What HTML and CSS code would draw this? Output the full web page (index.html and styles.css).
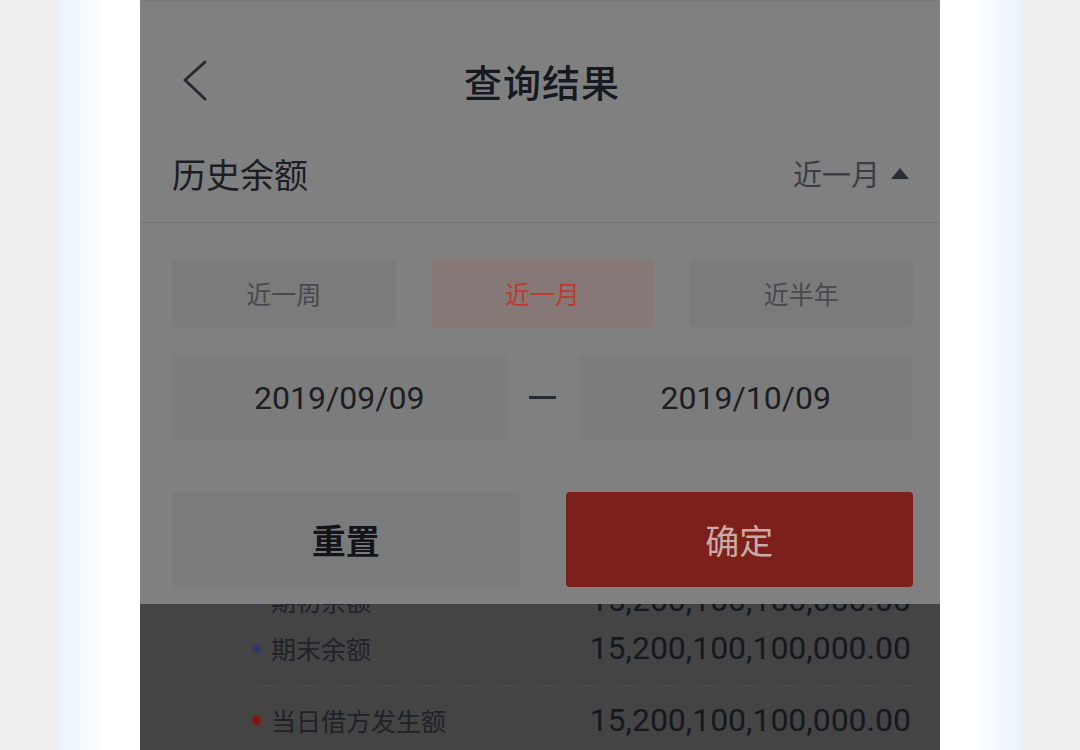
FILE: index.html
```html
<!DOCTYPE html>
<html lang="zh-CN">
<head>
<meta charset="utf-8">
<title>查询结果</title>
<link rel="stylesheet" href="styles.css">
</head>
<body>
<div class="stage">
  <div class="phone">
    <header class="nav">
      <span class="back">
        <svg width="28" height="42" viewBox="0 0 28 42"><polyline points="23,2 3,20 23,39" fill="none" stroke="#262930" stroke-width="3" stroke-linecap="round" stroke-linejoin="round"/></svg>
      </span>
      <h1 class="title">查询结果</h1>
    </header>
    <div class="filter">
      <span class="filter-label">历史余额</span>
      <span class="filter-range">近一月<i class="caret"></i></span>
    </div>
    <section class="panel">
      <div class="periods">
        <button class="period">近一周</button>
        <button class="period active">近一月</button>
        <button class="period">近半年</button>
      </div>
      <div class="dates">
        <div class="date">2019/09/09</div>
        <div class="dash"><span></span></div>
        <div class="date">2019/10/09</div>
      </div>
      <div class="actions">
        <button class="btn reset">重置</button>
        <button class="btn confirm">确定</button>
      </div>
    </section>
    <div class="backdrop">
      <div class="list">
        <div class="row"><span class="name"><i class="dot blue"></i>期初余额</span><span class="value">15,200,100,100,000.00</span></div>
        <div class="row"><span class="name"><i class="dot blue"></i>期末余额</span><span class="value">15,200,100,100,000.00</span></div>
        <div class="sep"></div>
        <div class="row tall"><span class="name"><i class="dot red"></i>当日借方发生额</span><span class="value">15,200,100,100,000.00</span></div>
      </div>
    </div>
  </div>
</div>
</body>
</html>
```

FILE: styles.css
```css
* { box-sizing: border-box; }
html, body { margin: 0; padding: 0; }
body {
  width: 1080px;
  height: 750px;
  overflow: hidden;
  background: #efefef;
  font-family: "Noto Sans CJK SC", "Noto Sans", sans-serif;
}
.stage {
  width: 962px;
  height: 750px;
  margin-left: 59px;
  padding: 0 81px;
  background: linear-gradient(to right, #e7f4fd 0px, #ffffff 48px, #ffffff calc(100% - 48px), #e7f4fd 100%);
}
.phone {
  width: 800px;
  height: 750px;
  background: #808080;
  border-top: 1px solid #777777;
  display: flex;
  flex-direction: column;
  overflow: hidden;
}
.nav {
  height: 129px;
  padding-top: 30px;
  display: flex;
  align-items: center;
  position: relative;
}
.back {
  position: absolute;
  left: 42px;
  top: 59px;
  width: 28px;
  height: 42px;
  display: block;
}
.back svg { display: block; }
.title {
  margin: 0 auto;
  padding-left: 4px;
  font-size: 38px;
  font-weight: 500;
  color: #16191f;
  letter-spacing: 1px;
  line-height: 1;
}
.filter {
  height: 93px;
  border-bottom: 1px solid #737373;
  display: flex;
  align-items: center;
  justify-content: space-between;
  padding: 0 31px 6px 32px;
}
.filter-label {
  font-size: 34px;
  color: #1b1e25;
}
.filter-range {
  font-size: 29px;
  color: #3b3e45;
  display: flex;
  align-items: center;
}
.caret {
  display: inline-block;
  width: 0;
  height: 0;
  margin-left: 11px;
  border-left: 9px solid transparent;
  border-right: 9px solid transparent;
  border-bottom: 11px solid #2a2d35;
}
.panel {
  padding: 36px 27px 17px 32px;
}
.periods {
  display: grid;
  grid-template-columns: 1fr 1fr 1fr;
  column-gap: 35px;
}
button {
  font-family: inherit;
  border: 0;
  padding: 0;
  margin: 0;
}
.period {
  height: 68px;
  border-radius: 4px;
  background: #7b7b7b;
  color: #47494e;
  font-size: 25px;
}
.period.active {
  background: #867877;
  color: #c0392e;
}
.dates {
  margin-top: 28px;
  display: grid;
  grid-template-columns: 1fr 72px 1fr;
}
.date {
  height: 85px;
  background: #7c7c7c;
  border-radius: 3px;
  display: flex;
  align-items: center;
  justify-content: center;
  font-family: Roboto, "Noto Sans", sans-serif;
  font-size: 32px;
  color: #1b1e25;
}
.dash {
  display: flex;
  align-items: center;
  justify-content: center;
}
.dash span {
  display: block;
  width: 27px;
  height: 3px;
  background: #272a32;
}
.actions {
  margin-top: 52px;
  display: grid;
  grid-template-columns: 1fr 1fr;
  column-gap: 46px;
}
.btn {
  height: 95px;
  border-radius: 4px;
  font-size: 34px;
}
.reset {
  background: #7b7b7b;
  color: #121419;
  font-weight: 700;
}
.confirm {
  background: #7d201b;
  color: #c8aaa6;
}
.backdrop {
  flex: 1;
  background: #444444;
  overflow: hidden;
}
.list {
  margin-top: -28px;
  padding: 0 29px 0 105px;
}
.row {
  height: 48px;
  display: flex;
  align-items: center;
  justify-content: space-between;
}
.row.tall { height: 66px; }
.name {
  display: flex;
  align-items: center;
  font-size: 25px;
  color: #1f2229;
}
.dot {
  display: block;
  flex: none;
  width: 9px;
  height: 9px;
  border-radius: 50%;
  margin: 0 10px 0 7px;
}
.dot.blue { background: #2c3a5e; }
.dot.red { background: #82160f; }
.value {
  font-family: Roboto, "Noto Sans", sans-serif;
  font-size: 32px;
  color: #15181e;
}
.sep {
  margin-top: 13px;
  border-top: 2px dashed #4b4b4b;
}
```
